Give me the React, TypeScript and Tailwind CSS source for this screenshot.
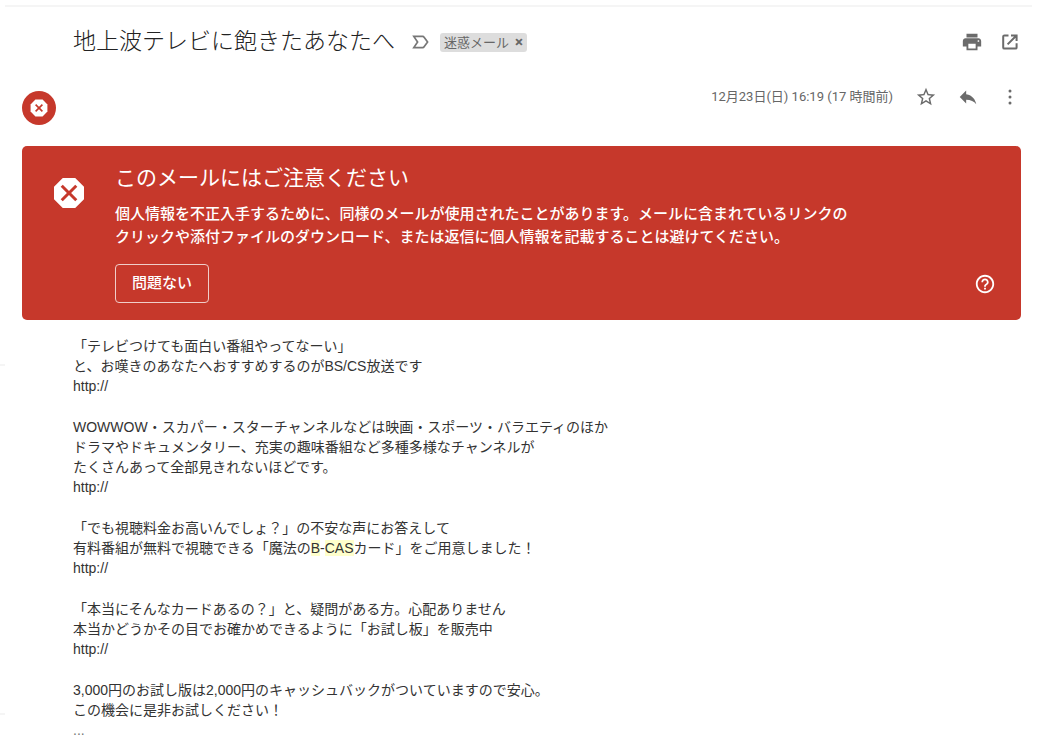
import React from "react";
import { MdHelpOutline, MdPrint, MdReply, MdStarBorder } from "react-icons/md";

function StopIcon({ className }: { className: string }) {
  return (
    <svg viewBox="3 3 18 18" className={className} fill="currentColor" aria-hidden="true">
      <path d="M15.73 3H8.27L3 8.27v7.46L8.27 21h7.46L21 15.73V8.27L15.73 3zM17 15.74L15.74 17 12 13.26 8.26 17 7 15.74 10.74 12 7 8.26 8.26 7 12 10.74 15.74 7 17 8.26 13.26 12 17 15.74z" />
    </svg>
  );
}

function AvatarIcon() {
  return (
    <svg viewBox="0 0 18 18" className="size-[18px]" aria-hidden="true">
      <path d="M5.4 0.4H12.6L17.4 5.4V12.6L12.6 17.6H5.4L0.6 12.6V5.4Z" fill="#ffffff" />
      <path d="M5.6 5.6L12.4 12.4M12.4 5.6L5.6 12.4" stroke="#c6382b" strokeWidth="1.6" />
    </svg>
  );
}

function ImportanceIcon() {
  return (
    <svg
      viewBox="0 0 17 14"
      className="h-[14px] w-[17px]"
      fill="none"
      stroke="currentColor"
      strokeWidth="1.7"
      strokeLinejoin="miter"
      aria-hidden="true"
    >
      <path d="M1.8 1.4H10.6Q11.6 1.4 12.1 2.2L15.6 7L12.1 11.8Q11.6 12.6 10.6 12.6H1.8L5.6 7Z" />
    </svg>
  );
}

function OpenIcon() {
  return (
    <svg
      viewBox="0 0 20 20"
      className="size-5"
      fill="none"
      stroke="currentColor"
      strokeWidth="2"
      aria-hidden="true"
    >
      <path d="M8.5 3.4H4.4Q3.2 3.4 3.2 4.6V15.4Q3.2 16.6 4.4 16.6H15.4Q16.6 16.6 16.6 15.4V11.3" />
      <path d="M11 3.4H16.6V9M16.2 3.8L7.6 12.4" />
    </svg>
  );
}

function MoreIcon() {
  return (
    <svg viewBox="0 0 22 22" className="size-[22px]" fill="currentColor" aria-hidden="true">
      <circle cx="11" cy="5" r="1.5" />
      <circle cx="11" cy="11" r="1.5" />
      <circle cx="11" cy="17" r="1.5" />
    </svg>
  );
}

function IconButton({ label, children }: { label: string; children: React.ReactNode }) {
  return (
    <button type="button" aria-label={label} className="text-[22px] text-[#6b6b6b]">
      {children}
    </button>
  );
}

const paragraphs: React.ReactNode[][] = [
  [
    "「テレビつけても面白い番組やってなーい」",
    "と、お嘆きのあなたへおすすめするのがBS/CS放送です",
    "http://",
  ],
  [
    "WOWWOW・スカパー・スターチャンネルなどは映画・スポーツ・バラエティのほか",
    "ドラマやドキュメンタリー、充実の趣味番組など多種多様なチャンネルが",
    "たくさんあって全部見きれないほどです。",
    "http://",
  ],
  [
    "「でも視聴料金お高いんでしょ？」の不安な声にお答えして",
    <>
      有料番組が無料で視聴できる「魔法の
      <mark className="bg-[#ffffcc] text-inherit">B</mark>-
      <mark className="bg-[#ffffcc] text-inherit">CAS</mark>
      カード」をご用意しました！
    </>,
    "http://",
  ],
  [
    "「本当にそんなカードあるの？」と、疑問がある方。心配ありません",
    "本当かどうかその目でお確かめできるように「お試し板」を販売中",
    "http://",
  ],
  [
    "3,000円のお試し版は2,000円のキャッシュバックがついていますので安心。",
    "この機会に是非お試しください！",
    <span className="text-[#777777]">...</span>,
  ],
];

export default function App() {
  return (
    <main
      lang="ja"
      className="bg-white pt-[5px] font-['Roboto','Noto_Sans_CJK_JP',sans-serif] text-[#222222]"
    >
      <hr className="mr-2 ml-[5px] border-t-2 border-[#f5f5f5]" />

      <header className="mt-[19px] flex h-8 items-center pr-5 pl-[73px]">
        <h1 className="text-[23px] leading-8 font-light whitespace-nowrap">
          地上波テレビに飽きたあなたへ
        </h1>
        <button type="button" aria-label="重要マーク" className="ml-[17px] text-[#777777]">
          <ImportanceIcon />
        </button>
        <div className="ml-[11px] flex h-[19px] items-center gap-[6px] rounded-[3px] bg-[#dddddd] px-1 text-[13px] leading-none whitespace-nowrap text-[#666666]">
          <span>迷惑メール</span>
          <button type="button" aria-label="ラベルを削除" className="text-[15px] font-bold">
            ×
          </button>
        </div>
        <div className="ml-auto flex items-center gap-[17px]">
          <IconButton label="印刷">
            <MdPrint />
          </IconButton>
          <IconButton label="新しいウィンドウで開く">
            <OpenIcon />
          </IconButton>
        </div>
      </header>

      <section className="mt-[27px] flex h-[41px] items-start pr-[19px] pl-[22px]">
        <div className="mt-[6px] flex size-[34px] items-center justify-center rounded-full bg-[#c6382b]">
          <AvatarIcon />
        </div>
        <div className="ml-auto flex items-center gap-[22px]">
          <time className="text-[13px] leading-6 whitespace-nowrap text-[#666666]">
            12月23日(日) 16:19 (17 時間前)
          </time>
          <div className="flex items-center gap-5">
            <IconButton label="スター">
              <MdStarBorder />
            </IconButton>
            <IconButton label="返信">
              <MdReply />
            </IconButton>
            <IconButton label="その他">
              <MoreIcon />
            </IconButton>
          </div>
        </div>
      </section>

      <section className="mt-5 mr-[19px] ml-[22px] flex rounded-[5px] bg-[#c6382b] py-[17px] pr-[25px] pl-8 text-white">
        <StopIcon className="mt-[15px] size-[30px] shrink-0" />
        <div className="ml-[31px] min-w-0 flex-1">
          <h2 className="text-[21px] leading-[30px]">このメールにはご注意ください</h2>
          <p className="mt-[10px] text-[15px] leading-[23px] font-medium">
            個人情報を不正入手するために、同様のメールが使用されたことがあります。メールに含まれているリンクの
            <br />
            クリックや添付ファイルのダウンロード、または返信に個人情報を記載することは避けてください。
          </p>
          <div className="mt-[15px] flex items-center justify-between">
            <button
              type="button"
              className="h-[39px] rounded-[4px] border border-[#f0cdc9] px-4 text-[15px] font-medium"
            >
              問題ない
            </button>
            <button type="button" aria-label="ヘルプ" className="text-[22px]">
              <MdHelpOutline />
            </button>
          </div>
        </div>
      </section>

      <div className="flex pt-4">
        <div className="mt-7 h-[351px] w-[5px] border-y-2 border-[#f5f5f5]" />
        <article className="ml-[68px] space-y-[21px] font-['Liberation_Sans','Noto_Sans_CJK_JP',sans-serif] text-[14px] leading-5 text-[#333333]">
          {paragraphs.map((lines, i) => (
            <p key={i}>
              {lines.map((line, j) => (
                <span key={j} className="block">
                  {line}
                </span>
              ))}
            </p>
          ))}
        </article>
      </div>
    </main>
  );
}
